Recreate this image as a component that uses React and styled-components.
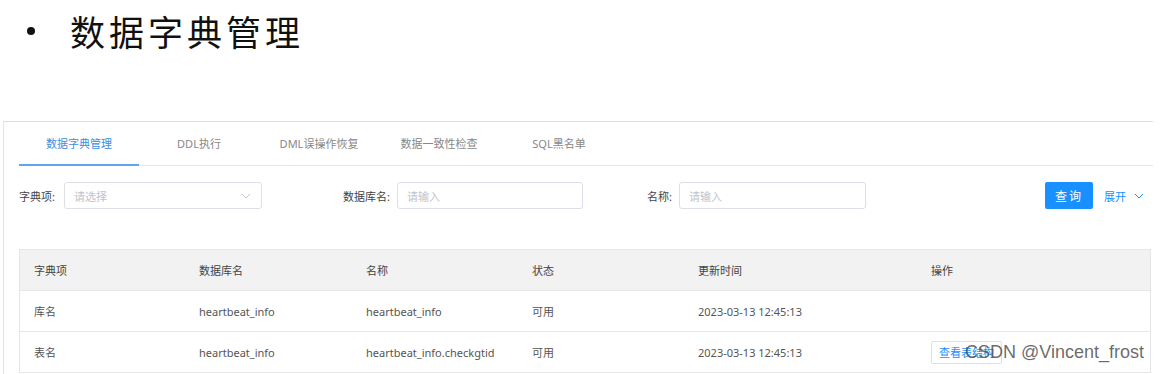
import React from 'react'
import styled, { createGlobalStyle } from 'styled-components'

const Global = createGlobalStyle`
  body {
    margin: 0;
    background: #fff;
    font-family: "Noto Sans", "Noto Sans CJK SC", sans-serif;
  }
`

const Page = styled.div`
  position: relative;
  width: 1160px;
  height: 374px;
  overflow: hidden;
`

const Heading = styled.div`
  display: flex;
  align-items: center;
  height: 60px;
  padding-left: 24px;
  color: #111;
  font-family: "Noto Sans CJK SC", sans-serif;
`

const Bullet = styled.span`
  width: 8px;
  height: 8px;
  border-radius: 50%;
  background: #111;
  margin: 2px 35px 0 3px;
`

const HeadingText = styled.span`
  font-size: 35px;
  letter-spacing: 4px;
  line-height: 1;
`

const Panel = styled.div`
  margin: 61px 0 0 3px;
  width: 1134px;
  border-top: 1px solid #dedede;
  border-left: 1px solid #e4e4e4;
  padding-left: 15px;
  height: 260px;
`

const TabBar = styled.div`
  display: flex;
  height: 43px;
  border-bottom: 1px solid #e6e6e6;
`

const Tab = styled.div`
  width: 120px;
  display: flex;
  align-items: center;
  justify-content: center;
  font-size: 11px;
  color: ${p => (p.$active ? '#3a8ee6' : '#888')};
  border-bottom: 2px solid ${p => (p.$active ? '#5ea7f0' : 'transparent')};
  margin-bottom: -1px;
  box-sizing: border-box;
`

const Filters = styled.div`
  display: grid;
  grid-template-columns: 324px 304px 1fr auto;
  align-items: center;
  padding: 16px 9px 0 0;
  height: 27px;
`

const Field = styled.div`
  display: flex;
  align-items: center;
`

const Label = styled.span`
  font-size: 11px;
  color: #444;
  margin-right: ${p => p.$gap || 4}px;
  white-space: nowrap;
`

const Box = styled.div`
  width: ${p => p.$w}px;
  height: 27px;
  box-sizing: border-box;
  border: 1px solid #dcdfe6;
  border-radius: 3px;
  display: flex;
  align-items: center;
  justify-content: space-between;
  padding: 0 10px 0 9px;
  font-size: 11px;
  color: #c0c4cc;
`

const Actions = styled.div`
  display: flex;
  align-items: center;
`

const QueryButton = styled.button`
  width: 48px;
  height: 27px;
  border: none;
  border-radius: 2px;
  background: #1890ff;
  color: #fff;
  font-size: 12px;
  letter-spacing: 2px;
  font-family: inherit;
  margin-right: 11px;
`

const Expand = styled.span`
  display: flex;
  align-items: center;
  gap: 8px;
  font-size: 11px;
  color: #1890ff;
`

const Table = styled.div`
  margin-top: 40px;
  width: 1130px;
  border: 1px solid #e6e6e6;
  border-bottom: none;
`

const Row = styled.div`
  display: grid;
  grid-template-columns: 165px 167px 166px 166px 233px 1fr;
  height: 40px;
  border-bottom: 1px solid #e6e6e6;
  background: ${p => (p.$head ? '#f2f2f2' : '#fff')};
`

const Cell = styled.div`
  display: flex;
  align-items: center;
  padding-left: 14px;
  font-size: 11px;
  color: ${p => (p.$head ? '#444' : '#555')};
  white-space: nowrap;
`

const SmallButton = styled.span`
  display: inline-flex;
  align-items: center;
  height: 21px;
  padding: 0 7px;
  border: 1px solid #dcdfe6;
  border-radius: 2px;
  font-size: 11px;
  color: #1890ff;
  background: #fff;
`

const Watermark = styled.div`
  position: absolute;
  left: 965px;
  top: 342px;
  font-family: "Liberation Sans", Arial, sans-serif;
  font-size: 18px;
  color: rgba(80, 80, 80, 0.85);
  white-space: nowrap;
`

const Chevron = ({ color }) => (
  <svg width="10" height="6" viewBox="0 0 10 6" fill="none">
    <path d="M1 1l4 4 4-4" stroke={color} strokeWidth="1" />
  </svg>
)

const tabs = ['数据字典管理', 'DDL执行', 'DML误操作恢复', '数据一致性检查', 'SQL黑名单']
const head = ['字典项', '数据库名', '名称', '状态', '更新时间', '操作']
const rows = [
  ['库名', 'heartbeat_info', 'heartbeat_info', '可用', '2023-03-13 12:45:13', null],
  ['表名', 'heartbeat_info', 'heartbeat_info.checkgtid', '可用', '2023-03-13 12:45:13', '查看表结构'],
]

export default function App() {
  return (
    <Page>
      <Global />
      <Heading>
        <Bullet />
        <HeadingText>数据字典管理</HeadingText>
      </Heading>
      <Panel>
        <TabBar>
          {tabs.map((t, i) => (
            <Tab key={t} $active={i === 0}>{t}</Tab>
          ))}
        </TabBar>
        <Filters>
          <Field>
            <Label $gap={9}>字典项:</Label>
            <Box $w={198}>
              请选择
              <Chevron color="#c0c4cc" />
            </Box>
          </Field>
          <Field>
            <Label $gap={7}>数据库名:</Label>
            <Box $w={186}>请输入</Box>
          </Field>
          <Field>
            <Label $gap={7}>名称:</Label>
            <Box $w={187}>请输入</Box>
          </Field>
          <Actions>
            <QueryButton>查询</QueryButton>
            <Expand>
              展开
              <Chevron color="#1890ff" />
            </Expand>
          </Actions>
        </Filters>
        <Table>
          <Row $head>
            {head.map(h => (
              <Cell key={h} $head>{h}</Cell>
            ))}
          </Row>
          {rows.map((r, i) => (
            <Row key={i}>
              {r.map((c, j) => (
                <Cell key={j}>
                  {j === 5 ? c && <SmallButton>{c}</SmallButton> : c}
                </Cell>
              ))}
            </Row>
          ))}
        </Table>
      </Panel>
      <Watermark>CSDN @Vincent_frost</Watermark>
    </Page>
  )
}
